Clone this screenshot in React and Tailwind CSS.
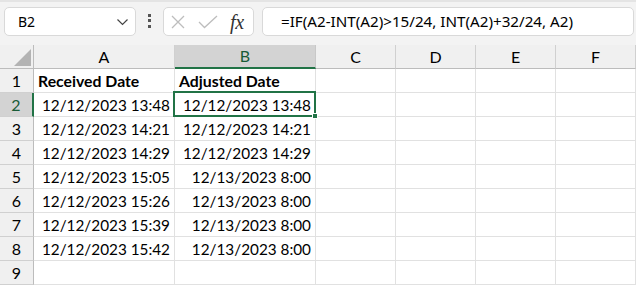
import React from "react";

const rows = [
  ["12/12/2023 13:48", "12/12/2023 13:48"],
  ["12/12/2023 14:21", "12/12/2023 14:21"],
  ["12/12/2023 14:29", "12/12/2023 14:29"],
  ["12/12/2023 15:05", "12/13/2023 8:00"],
  ["12/12/2023 15:26", "12/13/2023 8:00"],
  ["12/12/2023 15:39", "12/13/2023 8:00"],
  ["12/12/2023 15:42", "12/13/2023 8:00"],
];

const letters = ["A", "B", "C", "D", "E", "F"];

const Toolbar = () => (
  <div className="h-[45px] flex items-start pt-[7px] border-t-[2px] border-[#e4e4e4] pl-[4px] font-['Noto_Sans',sans-serif] text-[14px] text-black">
    {/* Name box */}
    <div className="w-[132px] h-[29px] mt-[-2px] shrink-0 bg-white border border-[#d9d9d9] rounded-[5px] flex items-center justify-between pl-[13px] pr-[6px]">
      <span className="leading-none">B2</span>
      <svg width="13" height="8" viewBox="0 0 13 8" fill="none" stroke="#444" strokeWidth="1.2">
        <path d="M1.5 1.5 L6.5 6.5 L11.5 1.5" />
      </svg>
    </div>

    {/* Dots */}
    <div className="w-[27px] h-[27px] mt-[-2px] shrink-0 flex flex-col items-center justify-center gap-[2.5px]">
      <span className="w-[3px] h-[3px] bg-[#555]" />
      <span className="w-[3px] h-[3px] bg-[#555]" />
      <span className="w-[3px] h-[3px] bg-[#555]" />
    </div>

    {/* Cancel / Enter / fx */}
    <div className="w-[91px] h-[29px] mt-[-2px] shrink-0 bg-white border border-[#d9d9d9] rounded-[5px] flex items-center pl-[6px]">
      <svg width="16" height="16" viewBox="0 0 16 16" fill="none" stroke="#bdbdbd" strokeWidth="1.3">
        <path d="M2 2 L14 14 M14 2 L2 14" />
      </svg>
      <svg width="20" height="14" viewBox="0 0 20 14" fill="none" stroke="#bdbdbd" strokeWidth="1.3" className="ml-[12px]">
        <path d="M1 7 L6.5 12.5 L19 1" />
      </svg>
      <span className="ml-[12px] font-['Liberation_Serif',serif] italic text-[20px] leading-none text-[#333] tracking-[-0.3px]">fx</span>
    </div>

    {/* Formula bar */}
    <div className="flex-1 h-[29px] mt-[-2px] ml-[8px] mr-[2px] bg-white border border-[#d9d9d9] rounded-[5px] flex items-center pl-[18px]">
      <span className="leading-none whitespace-nowrap text-[15.2px]">=IF(A2-INT(A2)&gt;15/24, INT(A2)+32/24, A2)</span>
    </div>
  </div>
);

const Grid = () => (
  <div className="relative font-['Lato',sans-serif] text-[15.3px] text-black">
    <div className="grid grid-cols-[34px_141px_141px_80px_80px_80px_80px] auto-rows-[24px]">
      {/* Header row */}
      <div className="bg-[#f0f0f0] border-r border-b border-[#bcbcbc] flex items-end justify-end pr-[2px] pb-[2px]">
        <div className="w-0 h-0 border-l-[17px] border-l-transparent border-b-[17px] border-b-[#b3b3b3]" />
      </div>
      {letters.map((l) =>
        l === "B" ? (
          <div key={l} className="bg-[#d3d3d3] border-r border-[#c8c8c8] border-b-2 border-b-[#217346] text-[#185c37] flex items-center justify-center leading-[22px] text-[16px]">
            {l}
          </div>
        ) : (
          <div key={l} className="bg-[#f0f0f0] border-r border-b border-[#d0d0d0] border-b-[#bcbcbc] flex items-center justify-center leading-[22px] text-[16px]">
            {l}
          </div>
        )
      )}

      {/* Row 1 */}
      <div className="bg-[#f0f0f0] border-r border-b border-[#bcbcbc] border-b-[#d0d0d0] flex items-center justify-center leading-[22px] text-[16px]">1</div>
      <div className="bg-white border-r border-b border-[#e1e1e1] font-bold text-[15.8px] pl-[4px] pt-px leading-[22px] whitespace-nowrap">Received Date</div>
      <div className="bg-white border-r border-b border-[#e1e1e1] font-bold text-[15.8px] pl-[4px] pt-px leading-[22px] whitespace-nowrap">Adjusted Date</div>
      {[0, 1, 2, 3].map((i) => (
        <div key={i} className="bg-white border-r border-b border-[#e1e1e1]" />
      ))}

      {/* Data rows */}
      {rows.map((r, i) => {
        const n = i + 2;
        const active = n === 2;
        return (
          <React.Fragment key={n}>
            <div
              className={
                active
                  ? "bg-[#d3d3d3] border-r-2 border-r-[#217346] border-b border-b-[#d0d0d0] text-[#185c37] flex items-center justify-center leading-[22px] text-[16px]"
                  : "bg-[#f0f0f0] border-r border-b border-[#bcbcbc] border-b-[#d0d0d0] flex items-center justify-center leading-[22px] text-[16px]"
              }
            >
              {n}
            </div>
            <div className="bg-white border-r border-b border-[#e1e1e1] text-right pr-[4px] pt-px leading-[22px] whitespace-nowrap">{r[0]}</div>
            <div className="bg-white border-r border-b border-[#e1e1e1] text-right pr-[4px] pt-px leading-[22px] whitespace-nowrap">{r[1]}</div>
            {[0, 1, 2, 3].map((j) => (
              <div key={j} className="bg-white border-r border-b border-[#e1e1e1]" />
            ))}
          </React.Fragment>
        );
      })}

      {/* Row 9 */}
      <div className="bg-[#f0f0f0] border-r border-b border-[#bcbcbc] border-b-[#d0d0d0] flex items-center justify-center leading-[22px] text-[16px]">9</div>
      {[0, 1, 2, 3, 4, 5].map((j) => (
        <div key={j} className="bg-white border-r border-b border-[#e1e1e1]" />
      ))}
    </div>

    {/* Selection on B2 */}
    <div className="absolute left-[173px] top-[46px] w-[143px] h-[26px] border-2 border-[#217346] pointer-events-none" />
    <div className="absolute left-[312px] top-[68px] w-[6px] h-[6px] bg-[#217346] border border-white pointer-events-none" />
  </div>
);

export default function App() {
  return (
    <div className="w-[636px] h-[285px] overflow-hidden bg-[#f3f3f3]">
      <Toolbar />
      <Grid />
    </div>
  );
}
